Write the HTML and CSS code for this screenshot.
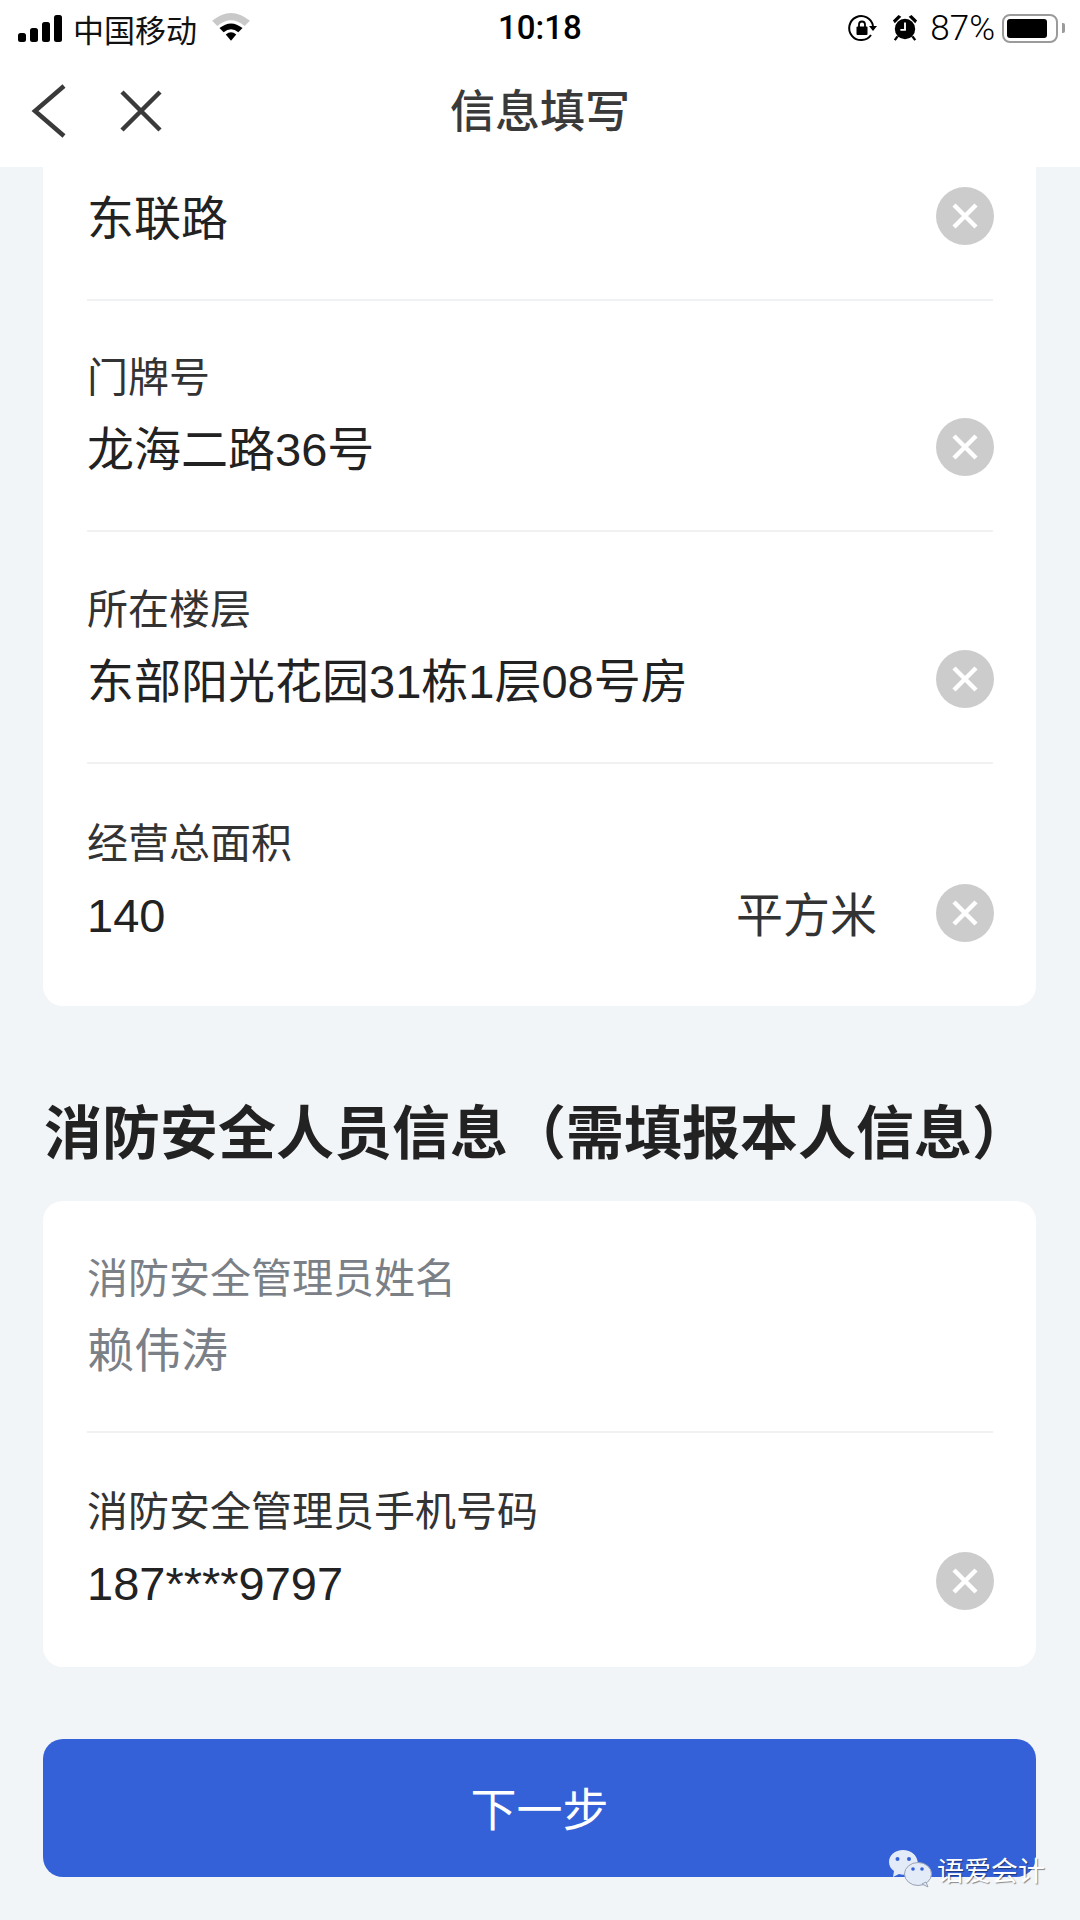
FILE: index.html
```html
<!DOCTYPE html>
<html lang="zh-CN">
<head>
    <meta charset="UTF-8">
    <meta name="viewport" content="width=device-width, initial-scale=1.0">
    <title>信息填写</title>
    <link rel="stylesheet" href="styles.css">
</head>
<body>
    <!-- Status bar -->
    <div class="status-bar">
        <div class="status-left">
            <svg class="signal" width="46" height="28" viewBox="0 0 46 28">
                <rect x="1" y="19" width="8" height="9" rx="2.5"/>
                <rect x="13" y="14" width="8" height="14" rx="2.5"/>
                <rect x="25" y="8" width="8" height="20" rx="2.5"/>
                <rect x="37" y="1" width="8" height="27" rx="2.5"/>
            </svg>
            <span class="carrier">中国移动</span>
            <svg class="wifi" width="42" height="32" viewBox="0 0 40 30">
                <path d="M2 10 Q20 -5 38 10 L33 15 Q20 4 7 15 Z" fill="#c9c9c9"/>
                <path d="M9 17 Q20 8 31 17 L27 21 Q20 15 13 21 Z"/>
                <path d="M15 23 Q20 19 25 23 L20 29 Z"/>
            </svg>
        </div>
        <span class="clock">10:18</span>
        <div class="status-right">
            <svg class="rotate-lock" width="30" height="30" viewBox="0 0 30 30">
                <path d="M24 22 A12 12 0 1 1 26 13" fill="none" stroke="#000" stroke-width="2"/>
                <path d="M22 13 L30 13 L26 18 Z"/>
                <rect x="9.500" y="13.500" width="11" height="8.500" rx="1"/>
                <path d="M12 14 V11.500 A3 3 0 0 1 18 11.500 V14" fill="none" stroke="#000" stroke-width="1.800"/>
            </svg>
            <svg class="alarm" width="26" height="28" viewBox="0 0 28 30">
                <circle cx="14" cy="16" r="11"/>
                <path d="M1 7 L7 1 L10 3 L3 10 Z M27 7 L21 1 L18 3 L25 10 Z"/>
                <path d="M6 24 L3 28 M22 24 L25 28" stroke="#000" stroke-width="2.500"/>
                <path d="M14 9 V17 H9" fill="none" stroke="#fff" stroke-width="2"/>
            </svg>
            <span class="percent">87%</span>
            <div class="battery"><div class="battery-fill"></div></div>
            <div class="battery-tip"></div>
        </div>
    </div>

    <!-- Nav -->
    <header class="nav">
        <div class="nav-icons">
            <svg width="36" height="54" viewBox="0 0 36 54"><path d="M33 2 L4 27 L33 52" fill="none" stroke="#3a3a3a" stroke-width="4.500"/></svg>
            <svg width="42" height="42" viewBox="0 0 42 42"><path d="M2 2 L40 40 M40 2 L2 40" fill="none" stroke="#3a3a3a" stroke-width="4.500"/></svg>
        </div>
        <h1>信息填写</h1>
    </header>

    <!-- Address card -->
    <section class="card card-top">
        <div class="row row-first">
            <div class="field"><div class="value">东联路</div></div>
            <span class="clear"><svg width="26" height="26" viewBox="0 0 26 26"><path d="M2 2 L24 24 M24 2 L2 24"/></svg></span>
        </div>
        <div class="row row-second">
            <div class="field">
                <div class="label">门牌号</div>
                <div class="value">龙海二路36号</div>
            </div>
            <span class="clear"><svg width="26" height="26" viewBox="0 0 26 26"><path d="M2 2 L24 24 M24 2 L2 24"/></svg></span>
        </div>
        <div class="row">
            <div class="field">
                <div class="label">所在楼层</div>
                <div class="value">东部阳光花园31栋1层08号房</div>
            </div>
            <span class="clear"><svg width="26" height="26" viewBox="0 0 26 26"><path d="M2 2 L24 24 M24 2 L2 24"/></svg></span>
        </div>
        <div class="row row-last">
            <div class="field">
                <div class="label">经营总面积</div>
                <div class="value">140</div>
            </div>
            <span class="unit">平方米</span>
            <span class="clear"><svg width="26" height="26" viewBox="0 0 26 26"><path d="M2 2 L24 24 M24 2 L2 24"/></svg></span>
        </div>
    </section>

    <h2 class="section-title">消防安全人员信息（需填报本人信息）</h2>

    <!-- Person card -->
    <section class="card">
        <div class="row">
            <div class="field">
                <div class="label muted">消防安全管理员姓名</div>
                <div class="value muted">赖伟涛</div>
            </div>
        </div>
        <div class="row row-last row-phone">
            <div class="field">
                <div class="label">消防安全管理员手机号码</div>
                <div class="value">187****9797</div>
            </div>
            <span class="clear"><svg width="26" height="26" viewBox="0 0 26 26"><path d="M2 2 L24 24 M24 2 L2 24"/></svg></span>
        </div>
    </section>

    <button class="next-button">下一步</button>

    <!-- Watermark -->
    <div class="watermark">
        <svg width="44" height="40" viewBox="0 0 44 40">
            <path d="M15 1 C7 1 1 6 1 13 C1 17 3 20 6 22 L5 28 L11 25 C14 26 17 26 19 25 L30 14 C29 6 23 1 15 1 Z" fill="#e4ebf8"/>
            <circle cx="9.500" cy="10" r="2" fill="#3461d8"/>
            <circle cx="21" cy="10" r="2" fill="#3461d8"/>
            <ellipse cx="30" cy="25" rx="13.500" ry="11.500" fill="#e4ebf8" stroke="#9aa3b5"/>
            <path d="M34 35 L40 38 L38 33 Z" fill="#e4ebf8" stroke="#9aa3b5"/>
            <circle cx="25" cy="20" r="1.800" fill="#3461d8"/>
            <circle cx="34" cy="20" r="1.800" fill="#3461d8"/>
        </svg>
        <span>语爱会计</span>
    </div>
</body>
</html>
```

FILE: styles.css
```css
* {
    margin: 0;
    padding: 0;
    box-sizing: border-box;
    font-family: "Liberation Sans", "Noto Sans CJK SC", sans-serif;
}

body {
    width: 1080px;
    height: 1920px;
    background: #f2f5f8;
    position: relative;
    overflow: hidden;
}

/* Status bar */
.status-bar {
    height: 56px;
    background: #fff;
    display: flex;
    align-items: center;
    justify-content: space-between;
    padding: 0 15px 0 17px;
    color: #000;
    position: relative;
}

.status-left,
.status-right {
    display: flex;
    align-items: center;
}

.carrier {
    font-size: 31px;
    margin-left: 10px;
    color: #111;
}

.wifi {
    margin: 0 0 4px 13px;
}

.clock {
    position: absolute;
    left: 498px;
    top: 8px;
    font-size: 33px;
    line-height: 40px;
    font-family: "Roboto", sans-serif;
    font-weight: 500;
    color: #000;
}

.rotate-lock {
    margin-right: 15px;
}

.alarm {
    margin-right: 12px;
}

.percent {
    font-size: 35px;
    font-family: "Roboto", sans-serif;
    font-weight: 300;
    margin-right: 7px;
}

.battery {
    width: 56px;
    height: 29px;
    border: 2.500px solid #9b9b9b;
    border-radius: 8px;
    padding: 3px;
}

.battery-fill {
    width: 40px;
    height: 100%;
    background: #000;
    border-radius: 3px;
}

.battery-tip {
    width: 3px;
    height: 10px;
    background: #9b9b9b;
    margin-left: 4px;
    border-radius: 0 2px 2px 0;
}

/* Nav */
.nav {
    height: 111px;
    background: #fff;
    position: relative;
    display: flex;
    align-items: center;
    justify-content: center;
    padding-bottom: 6px;
}

.nav h1 {
    font-size: 45px;
    font-weight: 500;
    color: #3a3a3a;
}

.nav-icons {
    position: absolute;
    left: 31px;
    top: 28px;
    display: flex;
    align-items: center;
    gap: 53px;
}

/* Cards */
.card {
    width: 993px;
    margin-left: 43px;
    background: #fff;
    border-radius: 20px;
    padding: 0 43px 0 44px;
}

.card-top {
    height: 839px;
    border-radius: 0 0 20px 20px;
}

.row {
    display: flex;
    align-items: flex-end;
    height: 232px;
    padding-bottom: 50px;
    border-bottom: 2px solid #f0f1f3;
}

.row-first {
    height: 134px;
}

.row-second {
    height: 231px;
}

.row-last {
    border-bottom: none;
}

.row-phone {
    height: 234px;
    padding-bottom: 53px;
}

.field {
    flex: 1;
}

.label {
    font-size: 41px;
    line-height: 56px;
    color: #333;
    margin-bottom: 14px;
}

.value {
    font-size: 47px;
    line-height: 60px;
    color: #222;
}

.muted {
    color: #7b8087;
}

.unit {
    font-size: 47px;
    line-height: 60px;
    color: #333;
    margin-right: 59px;
}

.clear {
    width: 58px;
    height: 58px;
    border-radius: 50%;
    background: #cccccc;
    display: flex;
    align-items: center;
    justify-content: center;
    margin: 0 -1px 4px 0;
}

.clear path {
    fill: none;
    stroke: #fff;
    stroke-width: 4.500;
}

.section-title {
    width: 993px;
    margin: 88px 0 0 44px;
    height: 107px;
    font-size: 58px;
    line-height: 80px;
    font-weight: 700;
    color: #222;
    white-space: nowrap;
}

.next-button {
    display: block;
    width: 993px;
    height: 138px;
    margin: 72px 0 0 43px;
    padding-bottom: 4px;
    border: none;
    border-radius: 20px;
    background: #3461d8;
    color: #fff;
    font-size: 46px;
}

/* Watermark */
.watermark {
    position: absolute;
    left: 888px;
    top: 1849px;
    display: flex;
    align-items: center;
    gap: 5px;
    color: #fff;
    font-size: 27px;
    text-shadow: 1px 1px 1px rgba(0, 0, 0, 0.45);
}
```
